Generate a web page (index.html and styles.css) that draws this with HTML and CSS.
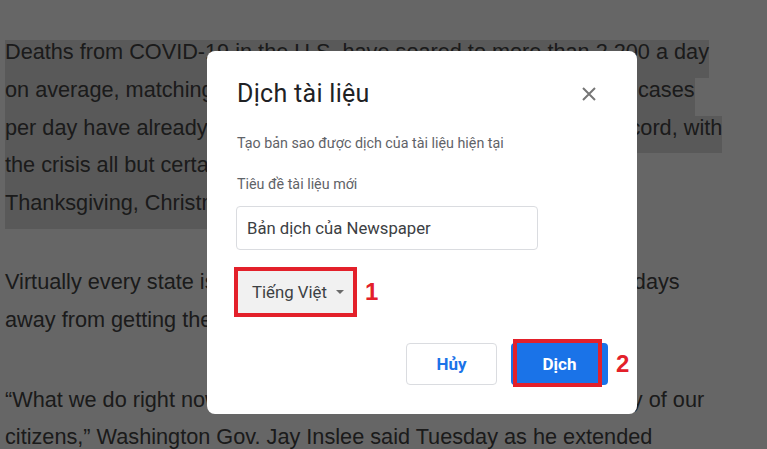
FILE: index.html
```html
<!DOCTYPE html>
<html lang="vi">
<head>
<meta charset="utf-8">
<title>Dịch tài liệu</title>
<link rel="stylesheet" href="styles.css">
</head>
<body>
<main class="doc">
  <p class="para sel">
    <span class="ln">Deaths from COVID-19 in the U.S. have soared to more than 2,200 a day</span>
    <span class="ln">on average, matching the peak reached in mid-April, and the new cases</span>
    <span class="ln">per day have already eclipsed 200,000 for the first time on any record, with</span>
    <span class="ln">the crisis all but certain to get worse because of</span>
    <span class="ln">Thanksgiving, Christmas and New Year’s.</span>
  </p>
  <p class="para">
    <span class="ln">Virtually every state is reporting surges, and the vaccines are still days</span>
    <span class="ln">away from getting the first shots into arms.</span>
  </p>
  <p class="para">
    <span class="ln">“What we do right now literally decides the life or death of so many of our</span>
    <span class="ln">citizens,” Washington Gov. Jay Inslee said Tuesday as he extended</span>
  </p>
</main>

<div class="overlay">
  <section class="dialog">
    <header class="dlg-head">
      <h1 class="dlg-title">Dịch tài liệu</h1>
      <button class="close" aria-label="Đóng">
        <svg width="14" height="14" viewBox="0 0 14 14"><path d="M1 1L13 13M13 1L1 13" stroke="#767676" stroke-width="2" fill="none"/></svg>
      </button>
    </header>
    <p class="dlg-sub">Tạo bản sao được dịch của tài liệu hiện tại</p>
    <label class="dlg-label">Tiêu đề tài liệu mới</label>
    <div class="input">Bản dịch của Newspaper</div>
    <div class="lang-row">
      <div class="dropdown"><span>Tiếng Việt</span><span class="caret"></span></div>
      <span class="mark">1</span>
    </div>
    <div class="actions">
      <button class="btn btn-cancel">Hủy</button>
      <div class="primary-wrap">
        <button class="btn btn-primary">Dịch</button>
        <span class="frame"></span>
        <span class="mark mark-2">2</span>
      </div>
    </div>
  </section>
</div>
</body>
</html>
```

FILE: styles.css
```css
html, body {
  margin: 0;
  padding: 0;
  background: #ffffff;
  width: 767px;
  height: 449px;
  overflow: hidden;
}

.doc {
  height: 449px;
  box-sizing: border-box;
  overflow: hidden;
  padding: 40px 0 0 5px;
  font-family: "Liberation Sans", Arial, sans-serif;
  font-size: 21.7px;
  color: #444444;
}

.para {
  margin: 0 0 41.5px;
}

.para:last-child {
  margin-bottom: 0;
}

.ln {
  display: block;
  width: fit-content;
  height: 37.8px;
  line-height: 23px;
  white-space: nowrap;
}

.sel .ln {
  background: #dedede;
}

.overlay {
  position: fixed;
  inset: 0;
  background: rgba(0, 0, 0, 0.6);
  padding: 51px 0 0 207px;
}

.dialog {
  width: 430px;
  box-sizing: border-box;
  background: #ffffff;
  border-radius: 8px;
  padding: 29px;
  font-family: Roboto, "Noto Sans", sans-serif;
  display: flex;
  flex-direction: column;
}

.dlg-head {
  display: flex;
  align-items: center;
  justify-content: space-between;
  height: 28px;
}

.dlg-title {
  margin: 0;
  font-weight: 400;
  font-size: 25px;
  letter-spacing: 0.3px;
  line-height: 28px;
  color: #202124;
  padding-left: 1px;
}

.close {
  width: 24px;
  height: 24px;
  margin-right: 7px;
  padding: 0;
  border: 0;
  background: transparent;
  display: flex;
  align-items: center;
  justify-content: center;
}

.dlg-sub {
  margin: 25px 0 0;
  font-size: 14.3px;
  line-height: 20px;
  color: #5f6368;
  padding-left: 1px;
}

.dlg-label {
  margin-top: 21px;
  font-size: 14.3px;
  line-height: 20px;
  color: #5f6368;
  padding-left: 1px;
}

.input {
  margin-top: 12px;
  width: 302px;
  height: 44px;
  box-sizing: border-box;
  border: 1px solid #dadce0;
  border-radius: 4px;
  padding: 0 10px;
  display: flex;
  align-items: center;
  font-size: 16.7px;
  color: #3c4043;
}

.lang-row {
  margin-top: 19px;
  display: flex;
  align-items: center;
  gap: 10px;
}

.dropdown {
  width: 119px;
  height: 46px;
  box-sizing: border-box;
  background: #f1f1f1;
  outline: 4px solid #e3202a;
  outline-offset: -2px;
  padding: 0 11px 0 16px;
  display: flex;
  align-items: center;
  justify-content: space-between;
  font-size: 16.8px;
  color: #3c4043;
}

.caret {
  width: 0;
  height: 0;
  border-left: 4px solid transparent;
  border-right: 4px solid transparent;
  border-top: 4px solid #6b6b6b;
}

.mark {
  font-family: "Liberation Sans", Arial, sans-serif;
  font-weight: 700;
  font-size: 24px;
  line-height: 28px;
  color: #e3202a;
}

.actions {
  margin-top: 28px;
  display: flex;
  justify-content: flex-end;
  gap: 14px;
}

.btn {
  height: 42px;
  border-radius: 4px;
  font-family: Roboto, "Noto Sans", sans-serif;
  font-size: 17px;
  font-weight: 700;
  padding: 0;
}

.btn-cancel {
  width: 91px;
  background: #ffffff;
  border: 1px solid #dadce0;
  color: #1a73e8;
}

.primary-wrap {
  position: relative;
  display: flex;
}

.btn-primary {
  width: 97px;
  background: #1a73e8;
  border: 0;
  color: #ffffff;
}

.frame {
  position: absolute;
  left: 2px;
  top: -4px;
  width: 89px;
  height: 48px;
  box-sizing: border-box;
  border: 4px solid #e3202a;
}

.mark-2 {
  position: absolute;
  left: 105px;
  top: 7px;
}
```
